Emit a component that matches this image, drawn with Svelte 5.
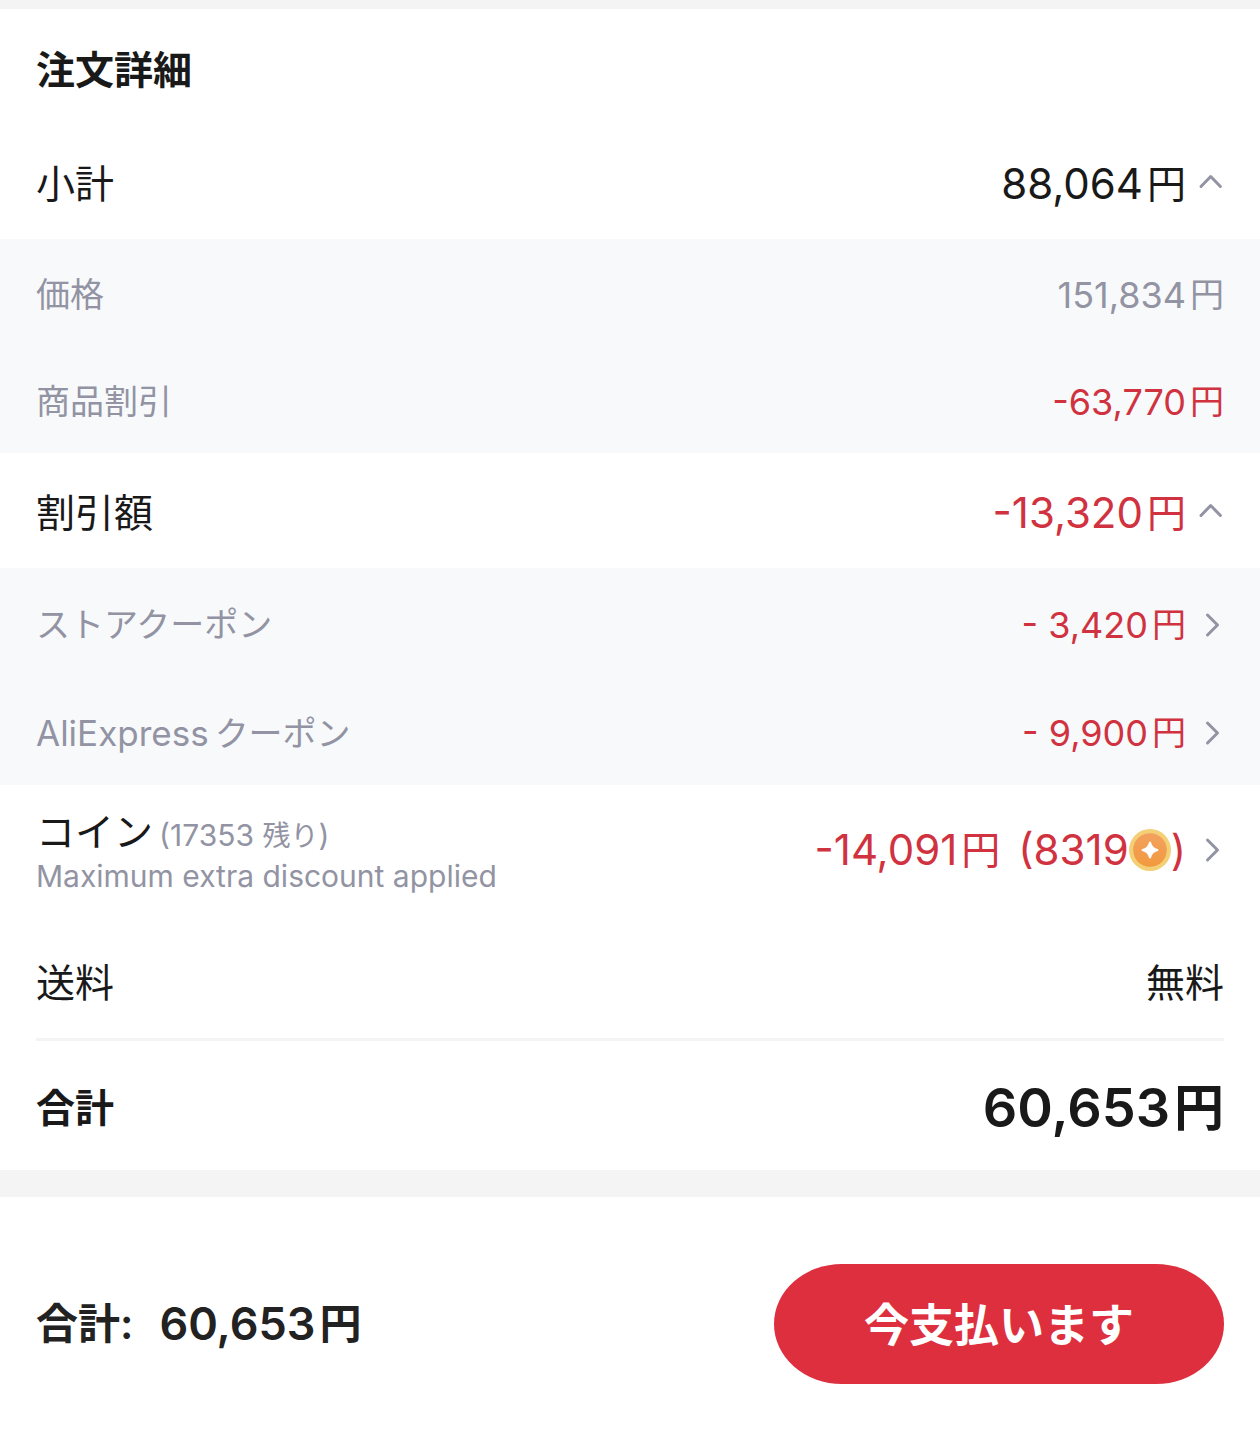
<script lang="ts">
  let subtotalOpen = $state(true)
  let discountOpen = $state(true)

  let prices = [
    { label: '価格', amount: '151,834', negative: false },
    { label: '商品割引', amount: '-63,770', negative: true }
  ]

  let coupons = [
    { latin: '', label: 'ストアクーポン', amount: '- 3,420' },
    { latin: 'AliExpress', label: 'クーポン', amount: '- 9,900' }
  ]
</script>

{#snippet yen(amount: string)}
  <span>{amount}</span><span class="yen">円</span>
{/snippet}

{#snippet caret(open: boolean)}
  <svg class="caret" class:closed={!open} viewBox="0 0 24 24" aria-hidden="true">
    <path d="M1 14.500 10.700 4.500l9.700 10" />
  </svg>
{/snippet}

{#snippet arrow()}
  <svg class="arrow" viewBox="0 0 24 24" aria-hidden="true">
    <path d="M7.500 2 17.500 12 7.500 22" />
  </svg>
{/snippet}

<main class="page">
  <section class="details">
    <h1 class="title">注文詳細</h1>

    <button
      class="row subtotal"
      type="button"
      aria-expanded={subtotalOpen}
      onclick={() => (subtotalOpen = !subtotalOpen)}
    >
      <span class="label">小計</span>
      <span class="amount">{@render yen('88,064')}</span>
      {@render caret(subtotalOpen)}
    </button>

    {#if subtotalOpen}
      <div class="group">
        {#each prices as item}
          <div class="row small">
            <span class="label">{item.label}</span>
            <span class="amount" class:negative={item.negative}>{@render yen(item.amount)}</span>
          </div>
        {/each}
      </div>
    {/if}

    <button
      class="row discount"
      type="button"
      aria-expanded={discountOpen}
      onclick={() => (discountOpen = !discountOpen)}
    >
      <span class="label">割引額</span>
      <span class="amount negative">{@render yen('-13,320')}</span>
      {@render caret(discountOpen)}
    </button>

    {#if discountOpen}
      <div class="group coupons">
        {#each coupons as item}
          <button class="row small coupon" type="button">
            <span class="label">
              {#if item.latin}<span class="latin">{item.latin}</span>{/if}{item.label}
            </span>
            <span class="amount negative">{@render yen(item.amount)}</span>
            {@render arrow()}
          </button>
        {/each}
      </div>
    {/if}

    <button class="row coins" type="button">
      <span class="label">
        <span class="coins-name">
          コイン<span class="note">(17353 <span class="note-jp">残り</span>)</span>
        </span>
        <span class="note">Maximum extra discount applied</span>
      </span>
      <span class="amount negative">
        {@render yen('-14,091')}<span class="count">(8319</span>
        <svg class="coin" viewBox="0 0 42 42" aria-hidden="true">
          <defs>
            <linearGradient id="coin-face" x1="0" y1="0" x2="0" y2="1">
              <stop offset="0" stop-color="#f3a160" />
              <stop offset="1" stop-color="#f19a3e" />
            </linearGradient>
          </defs>
          <circle cx="21" cy="21" r="21" fill="#f3cf75" />
          <circle cx="21" cy="21" r="16.800" fill="url(#coin-face)" />
          <path
            d="M20 13.200Q21 11.600 22 13.200 23.300 18.700 28.800 20 30.400 21 28.800 22 23.300 23.300 22 28.800 21 30.400 20 28.800 18.700 23.300 13.200 22 11.600 21 13.200 20 18.700 18.700 20 13.200z"
            fill="#fff"
          />
        </svg>
        <span>)</span>
      </span>
      {@render arrow()}
    </button>

    <div class="row shipping">
      <span class="label">送料</span>
      <span class="free">無料</span>
    </div>

    <div class="row total">
      <strong class="label">合計</strong>
      <strong class="amount">{@render yen('60,653')}</strong>
    </div>
  </section>

  <footer class="checkout">
    <strong class="sum">
      <span class="sum-label">合計:</span>
      <span class="amount">{@render yen('60,653')}</span>
    </strong>
    <button class="pay" type="button">今支払います</button>
  </footer>
</main>

<style>
  :global(body) {
    margin: 0;
    background: #fff;
  }

  .page {
    font-family: Inter, 'Noto Sans CJK JP', sans-serif;
    color: #191919;
    border-top: 9px solid #f4f4f4;
  }

  .details {
    border-bottom: 27px solid #f4f4f4;
  }

  .title {
    display: flex;
    align-items: center;
    height: 116px;
    padding: 0 36px;
    margin: 0;
    font-size: 39px;
    font-weight: 700;
  }

  button {
    font-family: inherit;
    color: inherit;
    cursor: pointer;
    background: none;
    border: none;
  }

  .row {
    box-sizing: border-box;
    display: flex;
    align-items: center;
    width: 100%;
    min-height: 114px;
    padding: 4px 36px 0;
    font-size: 39px;
    line-height: 48px;
    text-align: start;
  }

  .label {
    flex: 1;
  }

  .amount {
    display: inline-flex;
    align-items: center;
    font-size: 42px;
    white-space: nowrap;
  }

  .yen {
    margin-inline-start: 4px;
    font-size: 39px;
  }

  .negative {
    color: #d0333f;
  }

  .discount {
    min-height: 115px;
  }

  .group {
    color: #9293a3;
    background: #f8f9fb;
  }

  .coupons {
    padding-bottom: 1px;
  }

  .small {
    min-height: 107px;
    font-size: 34px;

    & .amount {
      font-size: 36px;
    }

    & .yen {
      font-size: 34px;
    }
  }

  .coupon {
    min-height: 108px;
    padding-top: 6px;
  }

  .latin {
    margin-inline-end: 6px;
    font-size: 35px;
  }

  .caret,
  .arrow {
    width: 24px;
    height: 24px;
    margin-inline-start: 14px;
    overflow: visible;
    fill: none;
    stroke: #9293a3;
    stroke-width: 3;
    stroke-linecap: round;
    stroke-linejoin: round;
  }

  .caret.closed {
    transform: rotate(180deg);
  }

  .coins {
    min-height: 130px;
    padding-top: 0;

    & .label {
      display: flex;
      flex-direction: column;
      padding-top: 4px;
    }

    & .note {
      font-size: 30px;
      line-height: 40px;
      color: #9293a3;
    }

    & .note-jp {
      font-size: 28px;
    }
  }

  .coins-name .note {
    margin-inline-start: 6px;
  }

  .count {
    margin-inline-start: 18px;
  }

  .coin {
    width: 42px;
    height: 42px;
  }

  .shipping {
    width: auto;
    min-height: 126px;
    padding: 12px 0 0;
    margin: 0 36px;
    border-bottom: 3px solid #f4f4f4;
  }

  .total {
    min-height: 129px;

    & .amount {
      font-size: 54px;
      font-weight: 600;
    }

    & .yen {
      font-size: 50px;
    }
  }

  .checkout {
    display: flex;
    align-items: center;
    justify-content: space-between;
    padding: 67px 36px 50px;
  }

  .sum {
    display: flex;
    gap: 26px;
    align-items: center;
    font-size: 42px;
    font-weight: 600;
    line-height: 48px;
    color: #222;

    & .amount {
      font-size: 45px;
    }

    & .yen {
      font-size: 42px;
    }
  }

  .pay {
    width: 450px;
    height: 120px;
    padding: 0 0 4px;
    font-size: 45px;
    font-weight: 600;
    color: #fff;
    background: #de2f3e;
    border-radius: 68px / 60px;
  }
</style>
